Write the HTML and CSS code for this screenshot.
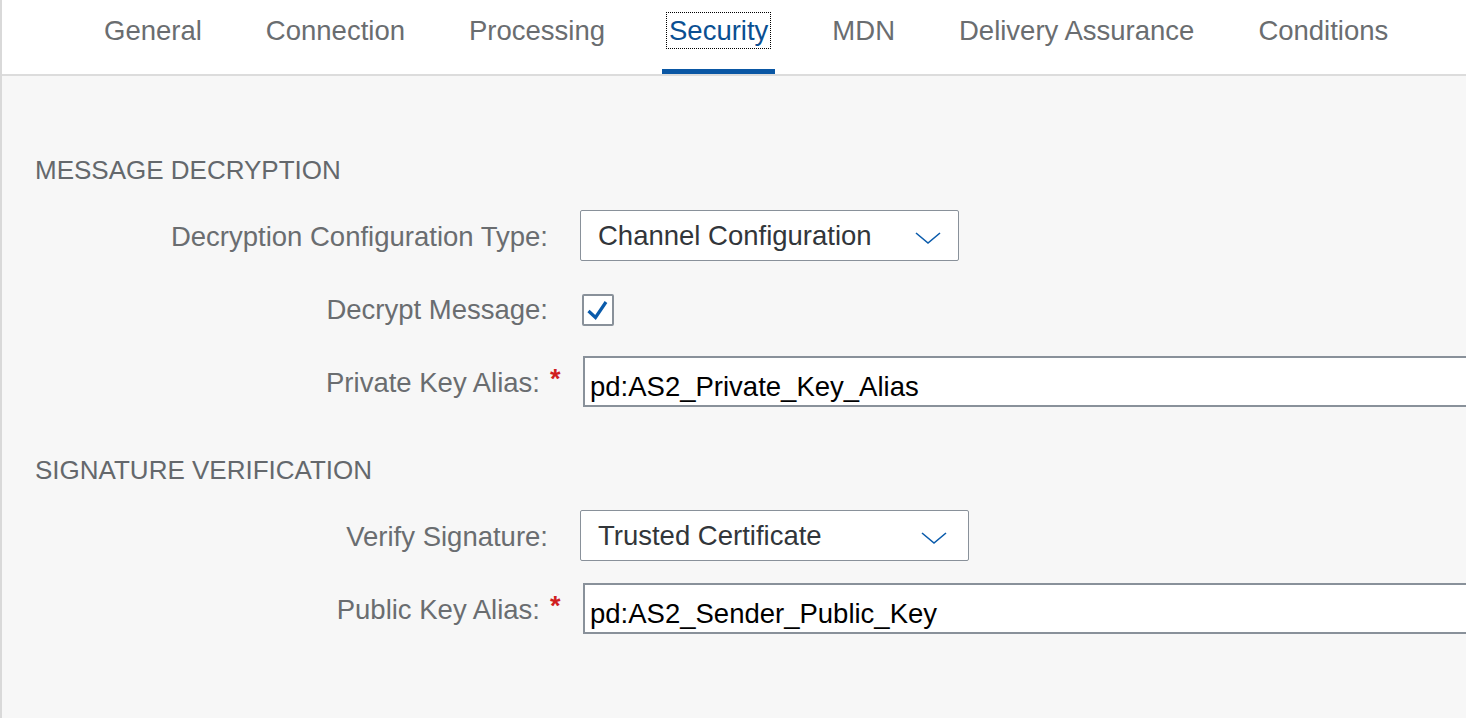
FILE: index.html
```html
<!DOCTYPE html>
<html lang="en">
<head>
<meta charset="utf-8">
<title>Security</title>
<link rel="stylesheet" href="styles.css">
</head>
<body>
<div class="page">
  <header class="tabbar">
    <div class="tab"><span class="tab-label">General</span></div>
    <div class="tab"><span class="tab-label">Connection</span></div>
    <div class="tab"><span class="tab-label">Processing</span></div>
    <div class="tab active"><span class="tab-label focus">Security</span></div>
    <div class="tab"><span class="tab-label">MDN</span></div>
    <div class="tab"><span class="tab-label">Delivery Assurance</span></div>
    <div class="tab"><span class="tab-label">Conditions</span></div>
  </header>

  <main class="content">
    <section class="section">
      <h2 class="section-title">MESSAGE DECRYPTION</h2>
      <div class="form">
        <div class="label">Decryption Configuration Type:</div>
        <div class="field">
          <div class="select sel-1">
            <span class="select-text">Channel Configuration</span>
            <svg class="chevron" width="26" height="14" viewBox="0 0 26 14"><polyline points="1,2 13,12 25,2" fill="none" stroke="#0a5bab" stroke-width="1.6"/></svg>
          </div>
        </div>

        <div class="label">Decrypt Message:</div>
        <div class="field">
          <div class="checkbox">
            <svg width="28" height="28" viewBox="0 0 28 28"><polyline points="4.5,15 11.5,21.5 22,6" fill="none" stroke="#0a5bab" stroke-width="3.2"/></svg>
          </div>
        </div>

        <div class="label req">Private Key Alias:<span class="star">*</span></div>
        <div class="field clip">
          <div class="input">pd:AS2_Private_Key_Alias</div>
        </div>
      </div>
    </section>

    <section class="section second">
      <h2 class="section-title">SIGNATURE VERIFICATION</h2>
      <div class="form">
        <div class="label">Verify Signature:</div>
        <div class="field">
          <div class="select sel-2">
            <span class="select-text">Trusted Certificate</span>
            <svg class="chevron" width="26" height="14" viewBox="0 0 26 14"><polyline points="1,2 13,12 25,2" fill="none" stroke="#0a5bab" stroke-width="1.6"/></svg>
          </div>
        </div>

        <div class="label req">Public Key Alias:<span class="star">*</span></div>
        <div class="field clip">
          <div class="input">pd:AS2_Sender_Public_Key</div>
        </div>
      </div>
    </section>
  </main>
</div>
</body>
</html>
```

FILE: styles.css
```css
html, body {
  margin: 0;
  padding: 0;
  height: 100%;
  overflow: hidden;
  background: #f7f7f7;
}

body {
  font-family: "Liberation Sans", Arial, sans-serif;
  font-size: 27.5px;
  color: #6a6d70;
}

.page {
  min-height: 100%;
  border-left: 2px solid #d9d9d9;
  background: #f7f7f7;
  box-sizing: border-box;
}

.tabbar {
  height: 76px;
  box-sizing: border-box;
  background: #ffffff;
  border-bottom: 2px solid #dcdcdc;
  display: flex;
  gap: 50px;
  padding-left: 95px;
}

.tab {
  height: 74px;
  box-sizing: border-box;
  padding: 13px 7px 0;
  border-bottom: 5px solid transparent;
  color: #6a6d70;
}

.tab.active {
  border-bottom-color: #0a57a4;
  color: #0a4f92;
}

.tab-label {
  display: inline-block;
  line-height: 35px;
  white-space: nowrap;
}

.tab-label.focus {
  outline: 1px dotted #000;
  padding: 0 2px;
  margin: 0 -2px;
}

.content {
  padding: 78px 0 0 33px;
}

.section-title {
  margin: 0;
  font-size: 26px;
  font-weight: normal;
  line-height: 32px;
  color: #64686c;
}

.section.second {
  margin-top: 47px;
}

.form {
  margin-top: 24px;
  display: grid;
  grid-template-columns: 531px 1fr;
  column-gap: 14px;
  row-gap: 22px;
}

.label {
  height: 51px;
  display: flex;
  align-items: center;
  justify-content: flex-end;
  padding-right: 18px;
  padding-top: 2px;
  box-sizing: border-box;
  white-space: nowrap;
  color: #6a6d70;
}

.label.req {
  padding-right: 0;
}

.star {
  display: inline-block;
  width: 26px;
  padding-left: 10px;
  box-sizing: border-box;
  color: #d0201f;
  font-weight: bold;
  font-size: 27px;
  position: relative;
  top: -3px;
}

.field {
  height: 51px;
  display: flex;
  align-items: center;
  min-width: 0;
}

.field.clip {
  overflow: hidden;
}

.select {
  height: 51px;
  box-sizing: border-box;
  border: 1.5px solid #89919a;
  border-radius: 2px;
  background: #ffffff;
  display: flex;
  align-items: center;
  justify-content: space-between;
  padding: 0 17px 0 17px;
  color: #32363a;
}

.sel-1 { width: 379px; }
.sel-2 { width: 389px; padding-right: 21px; }

.select-text {
  white-space: nowrap;
}

.chevron {
  display: block;
  margin-top: 4px;
}

.checkbox {
  width: 32px;
  height: 32px;
  box-sizing: border-box;
  margin-left: 2px;
  margin-top: 2px;
  border: 2px solid #89919a;
  border-radius: 2px;
  background: #ffffff;
  display: flex;
  align-items: center;
  justify-content: center;
}

.checkbox svg {
  display: block;
}

.input {
  margin-left: 3px;
  width: 1000px;
  flex: none;
  height: 51px;
  box-sizing: border-box;
  border: 2px solid #89919a;
  border-right: none;
  background: #ffffff;
  color: #000000;
  display: flex;
  align-items: center;
  padding: 10px 0 0 5px;
  white-space: nowrap;
}
```
